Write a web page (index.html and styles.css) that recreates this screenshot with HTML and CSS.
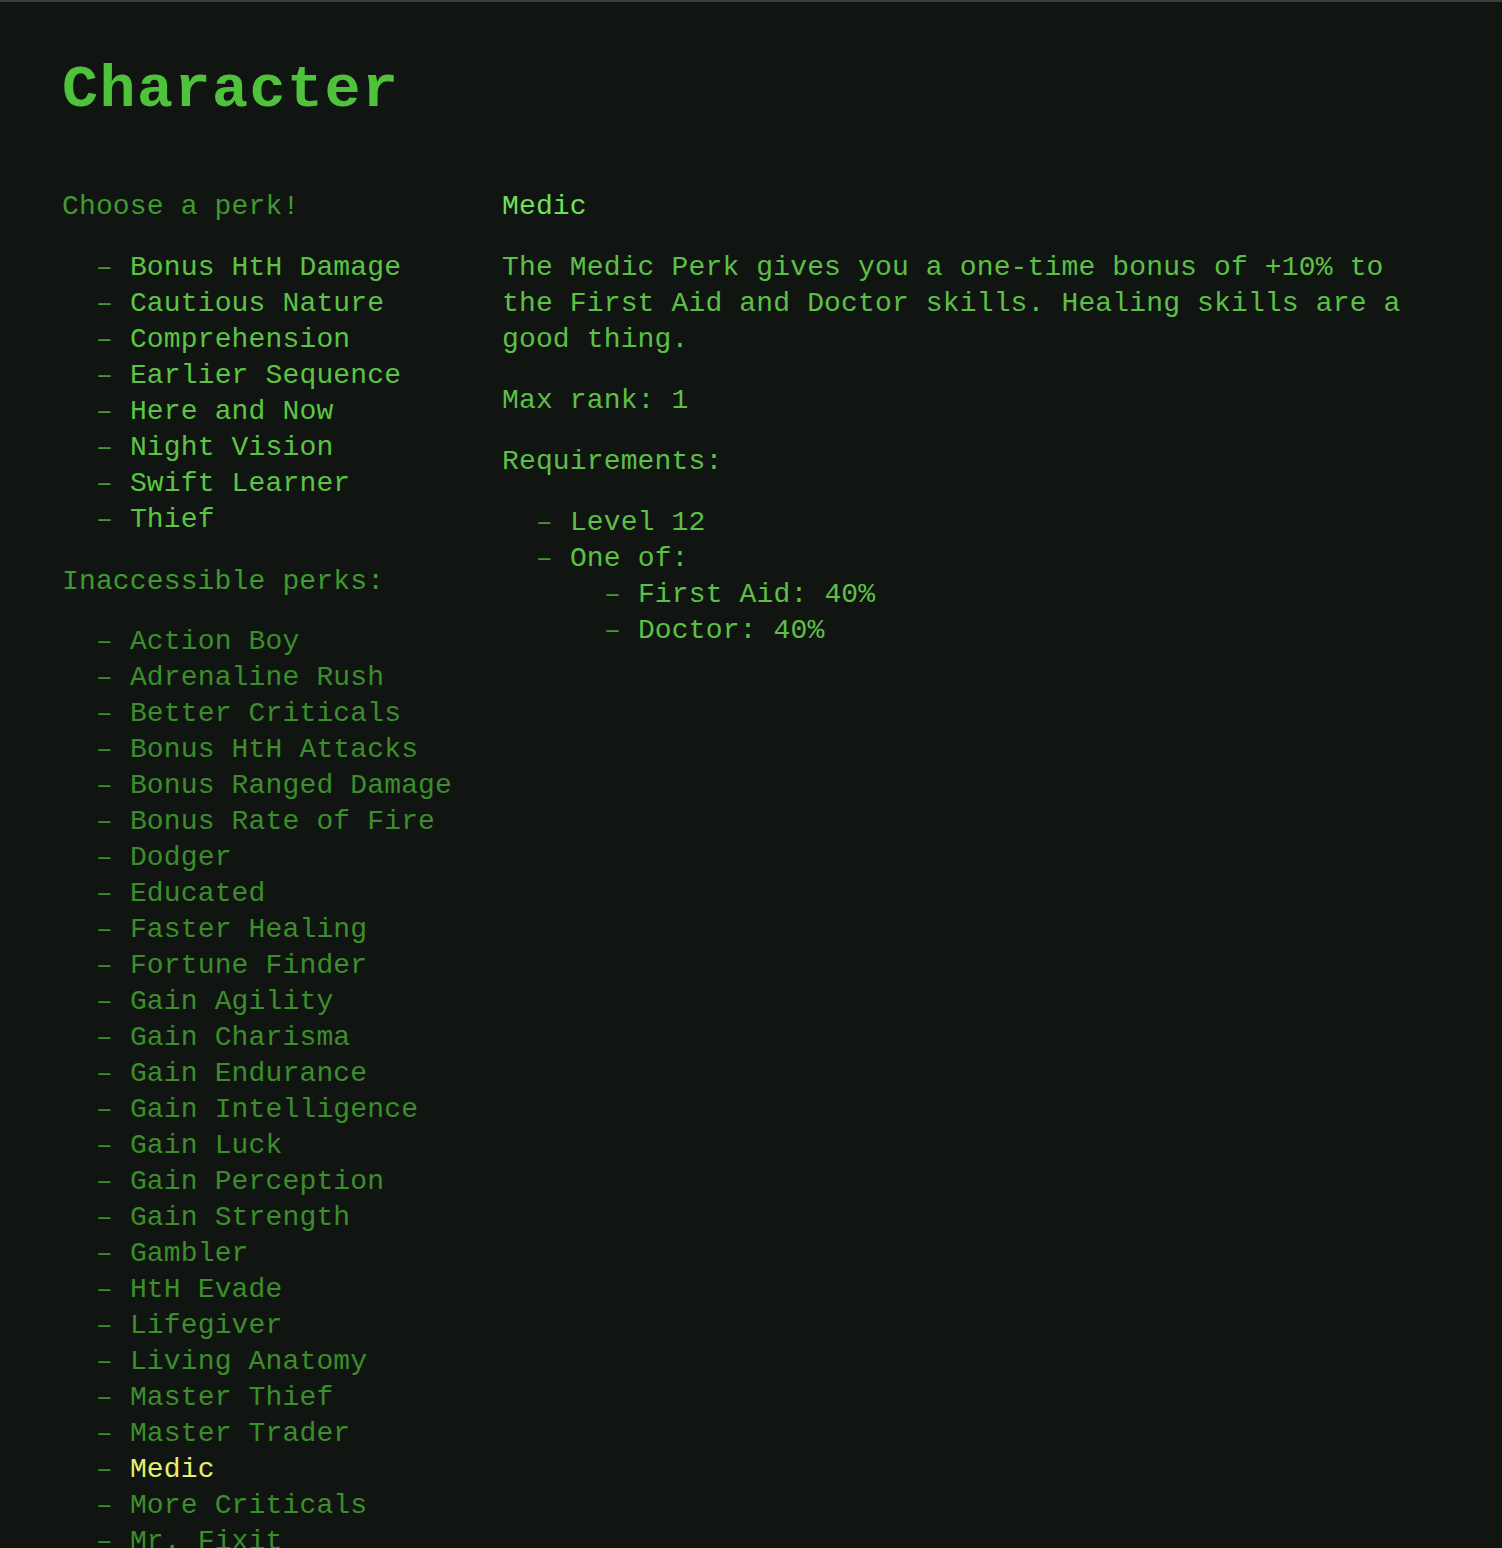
FILE: index.html
```html
<!DOCTYPE html>
<html lang="en">
<head>
<meta charset="utf-8">
<title>Character</title>
<link rel="stylesheet" href="styles.css">
</head>
<body>
<main class="page">
  <h1 class="title">Character</h1>
  <div class="columns">
    <section class="perks">
      <h2 class="section-head">Choose a perk!</h2>
      <ul class="list list-available">
        <li>Bonus HtH Damage</li>
        <li>Cautious Nature</li>
        <li>Comprehension</li>
        <li>Earlier Sequence</li>
        <li>Here and Now</li>
        <li>Night Vision</li>
        <li>Swift Learner</li>
        <li>Thief</li>
      </ul>
      <h2 class="section-head section-head-tight">Inaccessible perks:</h2>
      <ul class="list list-locked">
        <li>Action Boy</li>
        <li>Adrenaline Rush</li>
        <li>Better Criticals</li>
        <li>Bonus HtH Attacks</li>
        <li>Bonus Ranged Damage</li>
        <li>Bonus Rate of Fire</li>
        <li>Dodger</li>
        <li>Educated</li>
        <li>Faster Healing</li>
        <li>Fortune Finder</li>
        <li>Gain Agility</li>
        <li>Gain Charisma</li>
        <li>Gain Endurance</li>
        <li>Gain Intelligence</li>
        <li>Gain Luck</li>
        <li>Gain Perception</li>
        <li>Gain Strength</li>
        <li>Gambler</li>
        <li>HtH Evade</li>
        <li>Lifegiver</li>
        <li>Living Anatomy</li>
        <li>Master Thief</li>
        <li>Master Trader</li>
        <li class="selected">Medic</li>
        <li>More Criticals</li>
        <li>Mr. Fixit</li>
      </ul>
    </section>
    <section class="detail">
      <h2 class="detail-head">Medic</h2>
      <p class="detail-text">The Medic Perk gives you a one-time bonus of +10% to the First Aid and Doctor skills. Healing skills are a good thing.</p>
      <p class="detail-text">Max rank: 1</p>
      <p class="detail-text">Requirements:</p>
      <ul class="list list-req">
        <li>Level 12</li>
        <li>One of:
          <ul class="list list-nested">
            <li>First Aid: 40%</li>
            <li>Doctor: 40%</li>
          </ul>
        </li>
      </ul>
    </section>
  </div>
</main>
</body>
</html>
```

FILE: styles.css
```css
html, body {
  margin: 0;
  padding: 0;
  background: #111511;
}

body {
  border-top: 2px solid #3c3d3c;
  font-family: "Liberation Mono", "DejaVu Sans Mono", monospace;
  color: #5cc046;
  height: 1546px;
  overflow: hidden;
}

.page {
  padding: 0 62px;
}

.title {
  margin: 0;
  padding-top: 53px;
  font-size: 60px;
  line-height: 70px;
  font-weight: bold;
  letter-spacing: 1.5px;
  color: #4dc23a;
}

.columns {
  display: grid;
  grid-template-columns: 400px 1fr;
  column-gap: 40px;
  margin-top: 64px;
  font-size: 28px;
  line-height: 36px;
  letter-spacing: 0.15px;
}

.section-head,
.detail-head {
  margin: 0 0 25px;
  font-size: 28px;
  line-height: 36px;
  font-weight: normal;
}

.section-head-tight {
  margin-bottom: 24px;
}

.section-head {
  color: #3f9a30;
}

.detail-head {
  color: #6fe05a;
}

.list {
  list-style: none;
  margin: 0 0 26px;
  padding: 0 0 0 34px;
  white-space: nowrap;
}

.list li::before {
  content: "\2013  ";
  white-space: pre;
  opacity: 0.75;
}

.list-available {
  color: #5cc444;
}

.list-locked {
  color: #3b8e2b;
}

.list-locked li::before {
  opacity: 1;
}

.list-locked .selected {
  color: #e6f06c;
}

.list-locked .selected::before {
  color: #3b8e2b;
}

.detail-text {
  margin: 0 0 25px;
  color: #5cc046;
}

.list-req {
  color: #5cc046;
}

.list-nested {
  margin: 0;
  padding-left: 68px;
}
```
